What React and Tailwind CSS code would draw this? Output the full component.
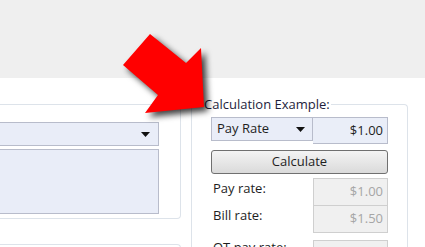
import React from 'react'

function Caret({ className = '' }) {
  return (
    <svg width="9" height="5" viewBox="0 0 9 5" className={className}>
      <path d="M0 0 H9 L4.5 5 Z" fill="#111" />
    </svg>
  )
}

export default function App() {
  return (
    <div className="relative w-[425px] h-[247px] overflow-hidden bg-white font-['Open_Sans',sans-serif] text-[13px] text-[#1e1e1e]">
      {/* top toolbar area */}
      <div className="h-[78px] bg-[#efefef]" />

      <div className="flex pt-[26px] gap-[10px]">
        {/* left panel */}
        <div className="flex flex-col shrink-0">
          <div className="w-[181px] h-[115px] border border-l-0 border-[#dde3ea] rounded-r-[4px] pt-[17px] pr-[21px] flex flex-col gap-[3px]">
            <div className="h-[24px] bg-[#e9edf8] border border-l-0 border-[#b8bccb] flex items-center justify-end pr-[8px]">
              <Caret />
            </div>
            <div className="h-[65px] bg-[#e9edf8] border border-l-0 border-[#b8bccb]" />
          </div>
          <div className="mt-[25px] w-[181px] h-[20px] border border-l-0 border-b-0 border-[#dde3ea] rounded-tr-[4px]" />
        </div>

        {/* calculation example group */}
        <fieldset className="w-[217px] h-[200px] -mt-[9px] border border-b-0 border-[#dde3ea] rounded-tr-[4px] px-[19px]">
          <legend className="-ml-[8px] px-[1px] leading-[18px] text-[13px] text-[#1e1e3c]">Calculation Example:</legend>
          <div className="flex mt-[4px] items-start">
            <div className="w-[102px] h-[24px] bg-[#e9edf8] border border-[#b8bccb] flex items-center justify-between pl-[5px] pr-[7px]">
              <span>Pay Rate</span>
              <Caret />
            </div>
            <div className="w-[75px] h-[27px] bg-[#eaeef8] border border-l-0 border-[#b8bccb] flex items-center justify-end pr-[4px]">
              $1.00
            </div>
          </div>
          <button className="mt-[6px] w-[177px] h-[24px] rounded-[3px] border border-[#707070] bg-gradient-to-b from-[#f4f4f4] to-[#dadada] flex items-center justify-center text-[13px] text-[#1e1e1e]">
            Calculate
          </button>
          <div className="mt-[4px] flex flex-col">
            <div className="flex h-[27px] items-start">
              <span className="flex-1 pl-[2px] pt-[1px]">Pay rate:</span>
              <div className="w-[75px] h-[28px] bg-[#f0f0f0] border border-[#cfcfcf] flex items-center justify-end pr-[4px] text-[#a6a6a6]">$1.00</div>
            </div>
            <div className="flex h-[27px] items-start">
              <span className="flex-1 pl-[2px] pt-[1px]">Bill rate:</span>
              <div className="w-[75px] h-[28px] bg-[#f0f0f0] border border-[#cfcfcf] flex items-center justify-end pr-[4px] text-[#a6a6a6]">$1.50</div>
            </div>
            <div className="flex h-[27px] items-start mt-[8px]">
              <span className="flex-1 pl-[2px] -mt-[2px]">OT pay rate:</span>
              <div className="w-[75px] h-[28px] bg-[#f0f0f0] border border-[#cfcfcf] flex items-center justify-end pr-[4px] text-[#a6a6a6]">$1.00</div>
            </div>
          </div>
        </fieldset>
      </div>

      {/* red pointer arrow */}
      <svg width="425" height="247" className="absolute left-0 top-0 pointer-events-none drop-shadow-[4px_4px_3px_rgba(0,0,0,0.75)]">
        <polygon points="150,34 186,63 201,48 204,107 145,113 158,95 123,65" fill="#ff0000" />
      </svg>
    </div>
  )
}
